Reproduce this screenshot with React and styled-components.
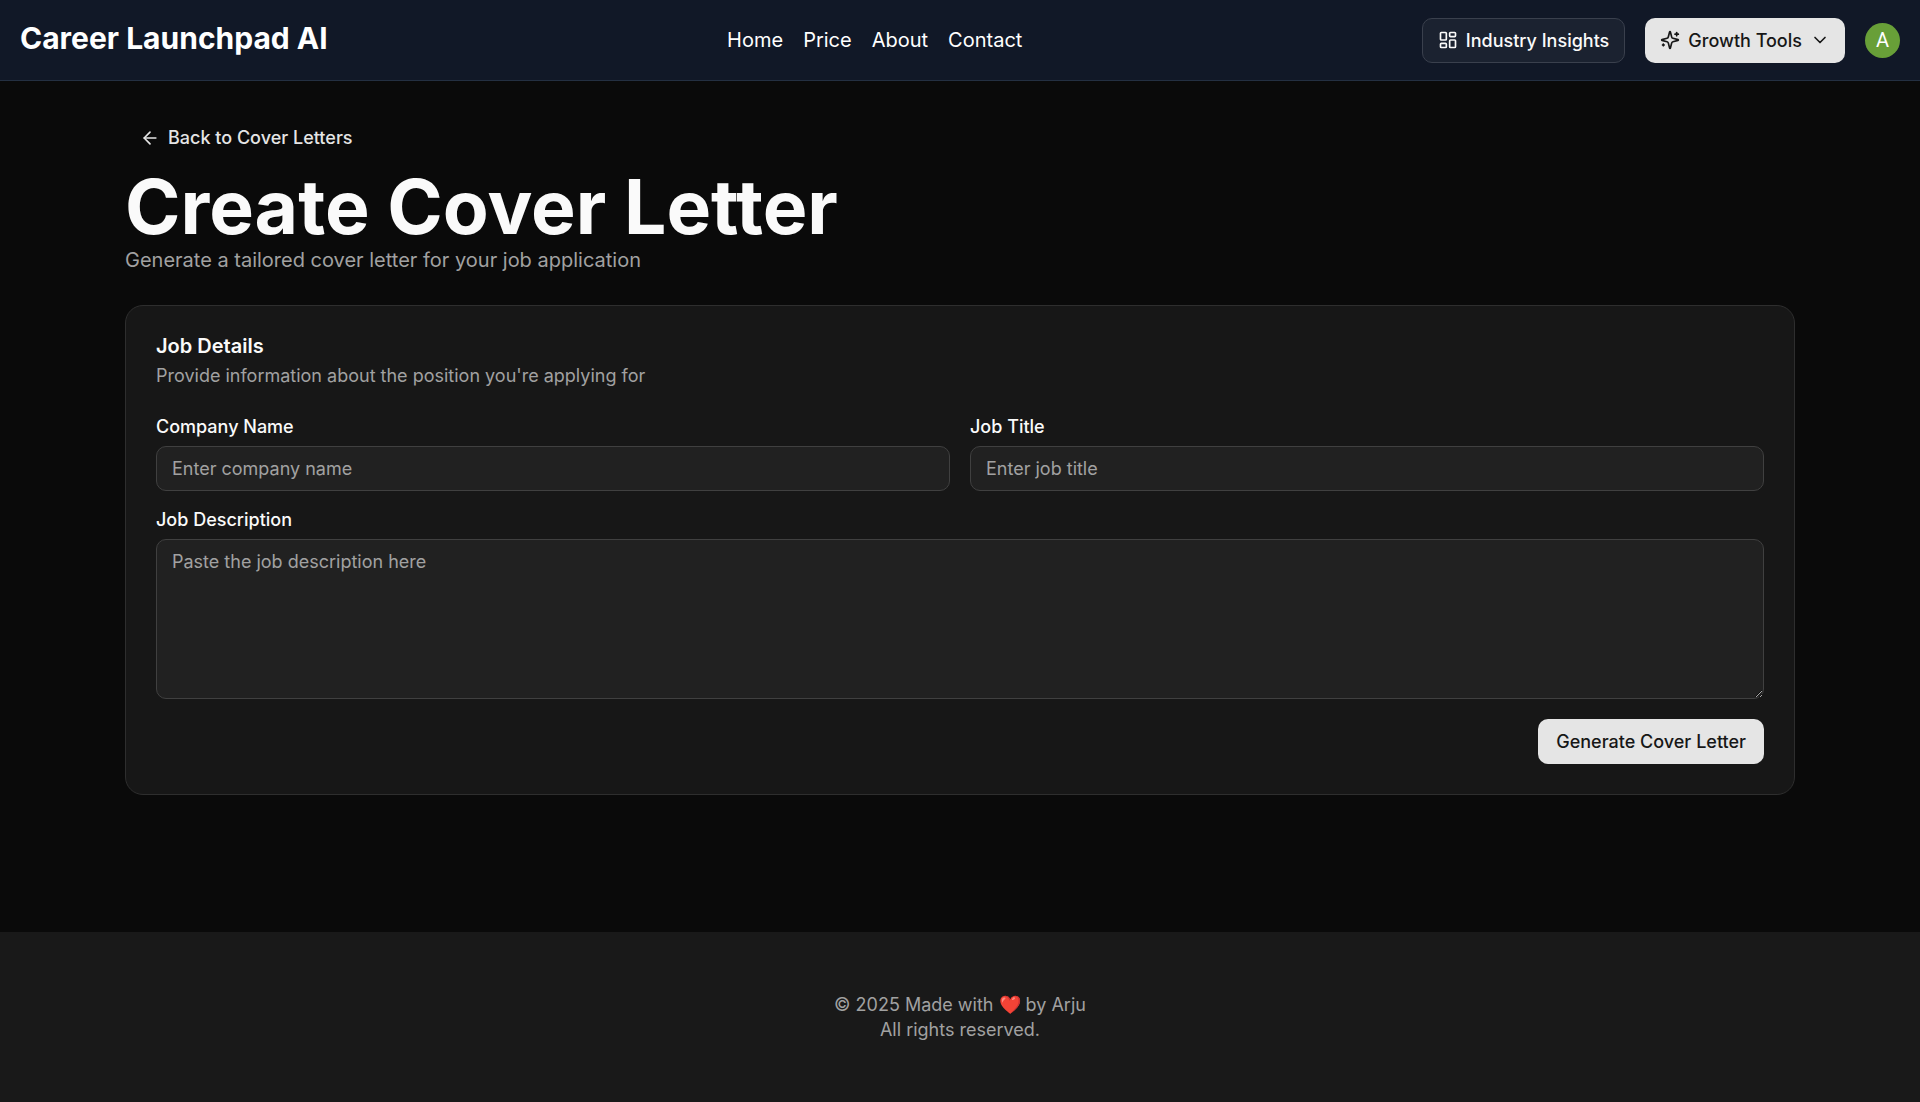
import React from "react";
import styled, { createGlobalStyle, css } from "styled-components";
import { ArrowLeft, ChevronDown, LayoutDashboard } from "lucide-react";

const GlobalStyle = createGlobalStyle`
  *, *::before, *::after {
    box-sizing: border-box;
  }
  html {
    background: #0a0a0a;
  }
  body {
    margin: 0;
    background: #0a0a0a;
    color: #fafafa;
    font-family: Inter, "Liberation Sans", sans-serif;
    font-size: 18px;
    line-height: 25px;
  }
  h1, h2, p {
    margin: 0;
  }
`;

const Page = styled.div`
  min-height: 100vh;
  display: flex;
  flex-direction: column;
`;

const Header = styled.header`
  border-bottom: 1px solid #243042;
  background: #111827;
`;

const Bar = styled.div`
  height: 80px;
  padding: 0 20px;
  display: flex;
  align-items: center;
  justify-content: space-between;
`;

const Brand = styled.a`
  color: #ffffff;
  font-size: 30px;
  font-weight: 700;
  line-height: 40px;
  padding-bottom: 4px;
  text-decoration: none;
`;

const Nav = styled.nav`
  display: flex;
  gap: 20px;
`;

const NavLink = styled.a`
  color: #ffffff;
  font-size: 20px;
  line-height: 30px;
  text-decoration: none;
`;

const Actions = styled.div`
  display: flex;
  align-items: center;
  gap: 20px;
`;

const variants = {
  primary: css`
    background: #e5e5e5;
    color: #171717;
  `,
  outline: css`
    background: #1b2230;
    border: 1px solid #3a404d;
    color: #fafafa;
  `,
  link: css`
    background: transparent;
    color: #e5e5e5;
  `,
};

const Button = styled.button`
  height: 45px;
  padding: 0 ${(p) => (p.$wide ? 18 : 15)}px;
  display: inline-flex;
  align-items: center;
  justify-content: center;
  gap: 8px;
  border: 0;
  border-radius: 10px;
  font: inherit;
  font-weight: 500;
  white-space: nowrap;
  text-decoration: none;
  cursor: pointer;
  ${(p) => variants[p.$variant]}

  svg {
    width: 20px;
    height: 20px;
    flex-shrink: 0;
  }
`;

const Avatar = styled.button`
  width: 35px;
  height: 35px;
  padding: 0;
  border: 0;
  border-radius: 50%;
  background: #689f38;
  color: #ffffff;
  font-family: Roboto, sans-serif;
  font-size: 20px;
  cursor: pointer;
`;

const Main = styled.main`
  flex: 1;
  padding: 34px 125px 136px;
`;

const Intro = styled.div`
  display: flex;
  flex-direction: column;
  align-items: flex-start;
  margin-bottom: 30px;
`;

const Title = styled.h1`
  margin-top: 9px;
  margin-bottom: 1px;
  font-size: 75px;
  font-weight: 700;
  line-height: 75px;
`;

const Subtitle = styled.p`
  color: #a1a1a1;
  font-size: 20px;
  line-height: 30px;
`;

const Card = styled.section`
  padding: 30px;
  border: 1px solid #2e2e2e;
  border-radius: 18px;
  background: #171717;
`;

const CardHeader = styled.div`
  margin-bottom: 30px;
`;

const CardTitle = styled.h2`
  margin-bottom: 7px;
  font-size: 20px;
  font-weight: 600;
  line-height: 20px;
`;

const CardText = styled.p`
  color: #a1a1a1;
`;

const Form = styled.form`
  display: flex;
  flex-direction: column;
  gap: 20px;
`;

const FieldRow = styled.div`
  display: grid;
  grid-template-columns: 1fr 1fr;
  gap: 20px;
`;

const Field = styled.div`
  display: flex;
  flex-direction: column;
  gap: 10px;
`;

const Label = styled.label`
  font-weight: 500;
  line-height: 18px;
`;

const control = css`
  width: 100%;
  display: block;
  border: 1px solid #404040;
  border-radius: 10px;
  background: #212121;
  color: #fafafa;
  font: inherit;

  &::placeholder {
    color: #a1a1a1;
    opacity: 1;
  }
`;

const TextInput = styled.input`
  ${control}
  height: 45px;
  padding: 0 15px;
`;

const TextArea = styled.textarea`
  ${control}
  height: 160px;
  padding: 9px 15px;
  resize: vertical;
`;

const FormActions = styled.div`
  display: flex;
  justify-content: flex-end;
`;

const Footer = styled.footer`
  padding: 60px 20px;
  background: #191919;
  color: #a1a1a1;
  text-align: center;
`;

const links = ["Home", "Price", "About", "Contact"];

function SparklesIcon() {
  return (
    <svg
      viewBox="0 0 24 24"
      fill="none"
      stroke="currentColor"
      strokeWidth="2"
      strokeLinecap="round"
      strokeLinejoin="round"
      aria-hidden="true"
    >
      <path d="M9.937 15.5A2 2 0 0 0 8.5 14.063l-6.135-1.582a.5.5 0 0 1 0-.962L8.5 9.936A2 2 0 0 0 9.937 8.5l1.582-6.135a.5.5 0 0 1 .963 0L14.063 8.5A2 2 0 0 0 15.5 9.937l6.135 1.581a.5.5 0 0 1 0 .964L15.5 14.063a2 2 0 0 0-1.437 1.437l-1.582 6.135a.5.5 0 0 1-.963 0z" />
      <path d="M20 3v4" />
      <path d="M22 5h-4" />
      <path d="M4 17v2" />
      <path d="M5 18H3" />
    </svg>
  );
}

export default function App() {
  return (
    <Page>
      <GlobalStyle />
      <Header>
        <Bar>
          <Brand href="#">Career Launchpad AI</Brand>
          <Nav>
            {links.map((name) => (
              <NavLink key={name} href={`#${name.toLowerCase()}`}>
                {name}
              </NavLink>
            ))}
          </Nav>
          <Actions>
            <Button type="button" $variant="outline">
              <LayoutDashboard />
              Industry Insights
            </Button>
            <Button type="button" $variant="primary">
              <SparklesIcon />
              Growth Tools
              <ChevronDown />
            </Button>
            <Avatar type="button">A</Avatar>
          </Actions>
        </Bar>
      </Header>
      <Main>
        <Intro>
          <Button as="a" href="#cover-letters" $variant="link">
            <ArrowLeft />
            Back to Cover Letters
          </Button>
          <Title>Create Cover Letter</Title>
          <Subtitle>Generate a tailored cover letter for your job application</Subtitle>
        </Intro>
        <Card>
          <CardHeader>
            <CardTitle>Job Details</CardTitle>
            <CardText>Provide information about the position you're applying for</CardText>
          </CardHeader>
          <Form>
            <FieldRow>
              <Field>
                <Label htmlFor="company">Company Name</Label>
                <TextInput id="company" placeholder="Enter company name" />
              </Field>
              <Field>
                <Label htmlFor="title">Job Title</Label>
                <TextInput id="title" placeholder="Enter job title" />
              </Field>
            </FieldRow>
            <Field>
              <Label htmlFor="description">Job Description</Label>
              <TextArea id="description" placeholder="Paste the job description here" />
            </Field>
            <FormActions>
              <Button type="button" $variant="primary" $wide>
                Generate Cover Letter
              </Button>
            </FormActions>
          </Form>
        </Card>
      </Main>
      <Footer>
        <p>© 2025 Made with ❤️ by Arju</p>
        <p>All rights reserved.</p>
      </Footer>
    </Page>
  );
}
